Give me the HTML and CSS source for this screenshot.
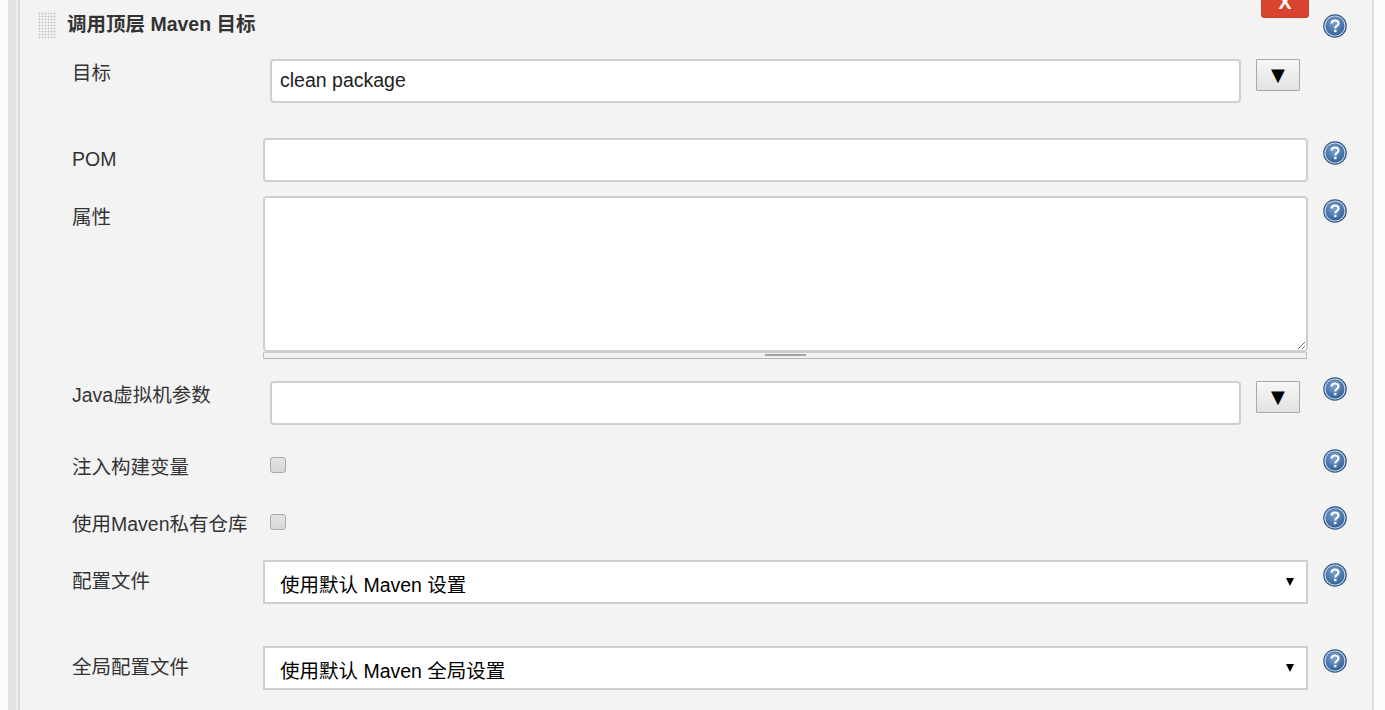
FILE: index.html
```html
<!DOCTYPE html>
<html lang="zh-CN">
<head>
<meta charset="utf-8">
<title>调用顶层 Maven 目标</title>
<link rel="stylesheet" href="styles.css">
</head>
<body>
<svg class="defs" width="0" height="0" aria-hidden="true">
  <defs>
    <radialGradient id="helpFill" cx="45%" cy="35%" r="70%">
      <stop offset="0" stop-color="#7da3d0"/>
      <stop offset="0.6" stop-color="#4c79ad"/>
      <stop offset="1" stop-color="#2f5c94"/>
    </radialGradient>
    <symbol id="help" viewBox="0 0 24 24">
      <circle cx="12" cy="12" r="11.8" fill="#2f5685"/>
      <circle cx="12" cy="12" r="10.6" fill="#c4d3e6"/>
      <circle cx="12" cy="12" r="9.4" fill="url(#helpFill)"/>
      <path d="M8.6 9.6c0-2 1.5-3.1 3.5-3.1s3.4 1.1 3.4 2.9c0 2.6-3.2 2.5-3.2 5" fill="none" stroke="#fff" stroke-width="2.2"/>
      <rect x="11.1" y="15.8" width="2.4" height="2.4" fill="#fff"/>
    </symbol>
  </defs>
</svg>
<div class="page">
  <div class="rail"></div>
  <main class="panel">
    <header class="head">
      <div class="grip"></div>
      <h2 class="title">调用顶层 Maven 目标</h2>
      <button class="delete" type="button">X</button>
      <svg class="help"><use href="#help"/></svg>
    </header>

    <div class="row row-goals">
      <label class="label">目标</label>
      <div class="field combo">
        <input class="input" type="text" value="clean package">
        <button class="expand" type="button">▼</button>
      </div>
      <div class="help-slot"></div>
    </div>

    <div class="row row-pom">
      <label class="label">POM</label>
      <div class="field"><input class="input" type="text"></div>
      <svg class="help"><use href="#help"/></svg>
    </div>

    <div class="row row-props">
      <label class="label">属性</label>
      <div class="field">
        <textarea class="area"></textarea>
        <div class="grippie"><span class="grippie-bar"></span></div>
      </div>
      <svg class="help"><use href="#help"/></svg>
    </div>

    <div class="row row-java">
      <label class="label">Java虚拟机参数</label>
      <div class="field combo">
        <input class="input" type="text">
        <button class="expand" type="button">▼</button>
      </div>
      <svg class="help"><use href="#help"/></svg>
    </div>

    <div class="row row-check">
      <label class="label">注入构建变量</label>
      <div class="field check-field"><input class="check" type="checkbox"></div>
      <svg class="help"><use href="#help"/></svg>
    </div>

    <div class="row row-check">
      <label class="label">使用Maven私有仓库</label>
      <div class="field check-field"><input class="check" type="checkbox"></div>
      <svg class="help"><use href="#help"/></svg>
    </div>

    <div class="row row-select">
      <label class="label">配置文件</label>
      <div class="field select-wrap">
        <select class="select"><option>使用默认 Maven 设置</option></select>
      </div>
      <svg class="help"><use href="#help"/></svg>
    </div>

    <div class="row row-select">
      <label class="label">全局配置文件</label>
      <div class="field select-wrap">
        <select class="select"><option>使用默认 Maven 全局设置</option></select>
      </div>
      <svg class="help"><use href="#help"/></svg>
    </div>
  </main>
  <div class="margin"></div>
</div>
</body>
</html>
```

FILE: styles.css
```css
* { box-sizing: border-box; }

html, body {
  margin: 0;
  height: 710px;
  overflow: hidden;
  background: #fbfbfb;
}

body {
  font-family: "Liberation Sans", "Noto Sans CJK SC", sans-serif;
  font-size: 19.5px;
  color: #333;
}

.defs { display: block; height: 0; }

.page {
  display: flex;
  height: 710px;
  padding-left: 8px;
}

.rail {
  width: 10px;
  flex: none;
  background: linear-gradient(to right, #e2e2e2 0 8px, #f0f0f0 8px);
}

.panel {
  width: 1356px;
  flex: none;
  background: #f3f3f3;
  border-left: 2px solid #dcdcdc;
  border-right: 2px solid #dcdcdc;
  padding-left: 52px;
}

.head {
  display: flex;
  height: 52px;
  margin-left: -34px;
  align-items: flex-start;
}

.grip {
  width: 18px;
  height: 27px;
  margin-top: 12px;
  flex: none;
  background-image: radial-gradient(circle at center, #c9c9c9 0.9px, transparent 1.1px);
  background-size: 3px 3px;
}

.title {
  margin: 11px 0 0 11px;
  width: 1194px;
  flex: none;
  font-size: 19.5px;
  line-height: 26px;
  font-weight: 700;
  color: #333;
}

.delete {
  width: 48px;
  height: 32px;
  margin: -14px 0 0 0;
  padding: 0;
  flex: none;
  border: 1px solid #c9402c;
  border-radius: 3px;
  background: #d9432f;
  color: #fff;
  font: 700 19.5px/30px "Liberation Sans", sans-serif;
}

.head .help {
  margin: 14px 0 0 14px;
}

.row {
  display: grid;
  grid-template-columns: 191px 1045px 39px;
  align-items: start;
}

.row > .help { justify-self: end; }

.row-goals { height: 86px; }
.row-pom { height: 58px; }
.row-props { height: 178px; }
.row-java { height: 72px; }
.row-check { height: 57px; }
.row-select { height: 86px; }

.label {
  padding-top: 9px;
  line-height: 24px;
  white-space: nowrap;
}

.help {
  display: block;
  width: 24px;
  height: 24px;
  margin-top: 3px;
}

.combo {
  display: flex;
  align-items: flex-start;
  padding: 7px 0 0 7px;
}

.input {
  display: block;
  width: 100%;
  height: 44px;
  padding: 0 8px 2px;
  border: 2px solid #cfcfcf;
  border-radius: 4px;
  background: #fff;
  color: #222;
  font: 19.5px "Liberation Sans", sans-serif;
  outline: none;
}

.combo .input {
  width: 971px;
  flex: none;
}

.expand {
  width: 44px;
  height: 32px;
  margin-left: 15px;
  padding: 0;
  flex: none;
  border: 1px solid #a9a9a9;
  border-radius: 1px;
  background: linear-gradient(to bottom, #f7f7f7, #e2e2e2);
  color: #000;
  font: 18px/30px "DejaVu Sans", sans-serif;
}

.area {
  display: block;
  width: 100%;
  height: 156px;
  padding: 8px;
  border: 2px solid #cfcfcf;
  border-radius: 4px;
  background: #fff;
  resize: vertical;
  outline: none;
}

.grippie {
  display: flex;
  justify-content: center;
  height: 7px;
  width: 1044px;
  background: #f1f1f1;
  border: 1px solid #c2c2c2;
  border-top: 1px solid #cfcfcf;
  border-bottom-color: #b4b4b4;
}

.grippie-bar {
  width: 41px;
  height: 2px;
  margin-top: 1px;
  background: #a3a3a3;
}

.check-field { padding: 11px 0 0 7px; }

.check {
  display: block;
  width: 16px;
  height: 16px;
  margin: 0;
  appearance: none;
  border: 1px solid #aaa;
  border-radius: 3px;
  background: linear-gradient(to bottom, #e2e2e2, #d8d8d8);
}

.select-wrap { position: relative; }

.select-wrap::after {
  content: "";
  position: absolute;
  right: 14px;
  top: 18px;
  border-left: 4.5px solid transparent;
  border-right: 4.5px solid transparent;
  border-top: 8px solid #000;
}

.select {
  display: block;
  width: 100%;
  height: 44px;
  padding: 6px 0 0 15px;
  border: 2px solid #cfcfcf;
  border-radius: 0;
  background: #fff;
  appearance: none;
  color: #000;
  font: 19.5px "Liberation Sans", "Noto Sans CJK SC", sans-serif;
  outline: none;
}

.margin { flex: 1; background: #fbfbfb; }
```
